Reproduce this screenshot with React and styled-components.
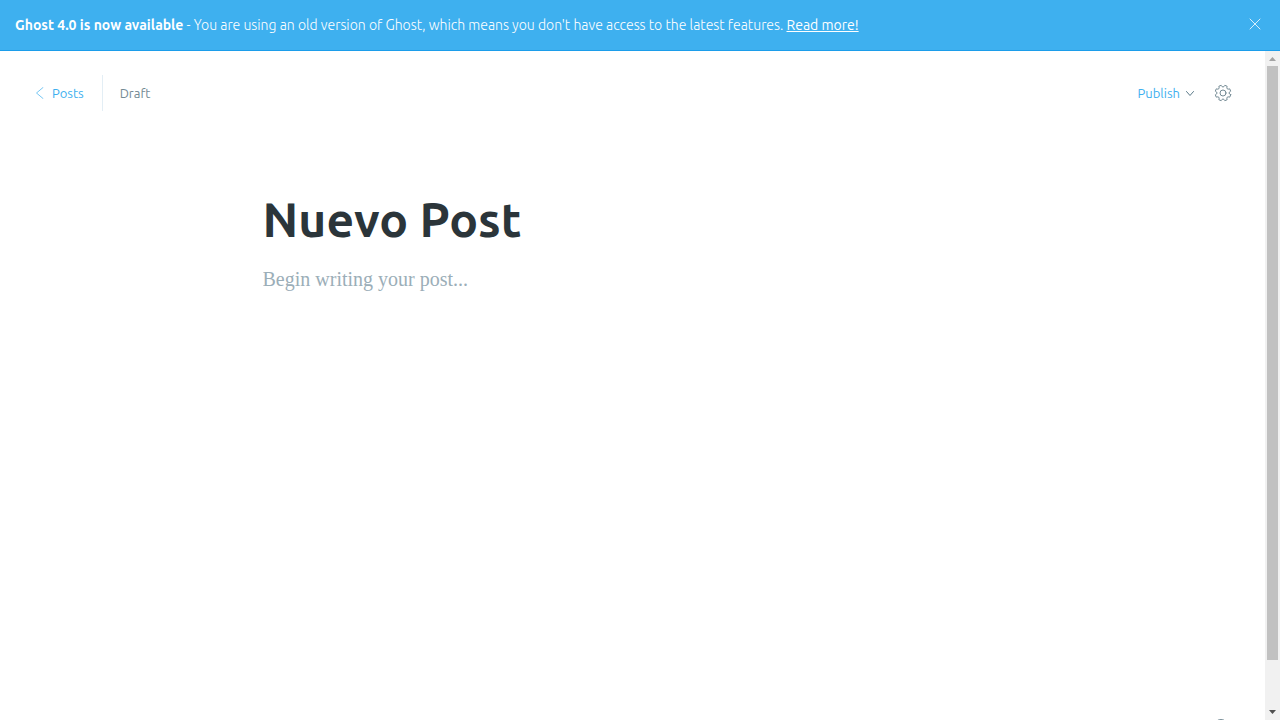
import React from 'react';
import styled, { createGlobalStyle } from 'styled-components';

const GlobalStyle = createGlobalStyle`
  *, *::before, *::after { box-sizing: border-box; }
  body {
    margin: 0;
    overflow: hidden;
    background: #fff;
    font-family: Ubuntu, "Open Sans", "Noto Sans", sans-serif;
  }
  button, input, textarea { font-family: inherit; }
`;

const Screen = styled.div`
  display: flex;
  flex-direction: column;
  height: 100vh;
`;

const Banner = styled.aside`
  display: flex;
  align-items: center;
  justify-content: space-between;
  flex: none;
  padding: 14px 19px 14px 15px;
  border-bottom: 1px solid #1c9dea;
  background: #3eb0ef;
  color: #fff;
`;

const Message = styled.p`
  margin: 0;
  font-size: 14px;
  line-height: 22px;
  font-weight: 300;
`;

const Strong = styled.strong`
  font-weight: 700;
`;

const BannerLink = styled.a`
  color: #fff;
  font-weight: 400;
  text-decoration: underline;
`;

const IconButton = styled.button`
  display: flex;
  padding: 0;
  border: 0;
  background: none;
  color: ${(p) => p.$color};
`;

const Body = styled.div`
  display: flex;
  flex: 1;
  min-height: 0;
`;

const Main = styled.main`
  display: flex;
  flex-direction: column;
  flex: 1;
  min-width: 0;
  overflow: hidden;
`;

const Header = styled.header`
  display: flex;
  align-items: center;
  justify-content: space-between;
  flex: none;
  padding: 24px 33px 0 34px;
`;

const Group = styled.div`
  display: flex;
  align-items: center;
  gap: ${(p) => p.$gap}px;
`;

const BackLink = styled.a`
  display: flex;
  align-items: center;
  gap: 6px;
  height: 36px;
  padding-right: 18px;
  border-right: 1px solid #e3eef5;
  color: #3eb0ef;
  font-size: 13px;
  text-decoration: none;
`;

const Status = styled.span`
  color: #738a94;
  font-size: 13px;
`;

const PublishButton = styled.button`
  display: flex;
  align-items: center;
  gap: 5px;
  padding: 0;
  border: 0;
  background: none;
  color: #3eb0ef;
  font-size: 13px;
`;

const Editor = styled.section`
  display: flex;
  flex-direction: column;
  flex: none;
  width: 100%;
  max-width: 740px;
  min-height: 608px;
  margin: 0 auto;
  padding-top: 78px;
`;

const TitleInput = styled.input`
  width: 100%;
  height: 60px;
  padding: 0;
  border: 0;
  outline: 0;
  background: none;
  color: #2b353a;
  font-size: 48px;
  font-weight: 700;
`;

const PostInput = styled.textarea`
  width: 100%;
  height: 64px;
  margin-top: 14px;
  padding: 0;
  border: 0;
  outline: 0;
  resize: none;
  background: none;
  font-family: "Liberation Serif", serif;
  font-size: 20px;
  line-height: 32px;
  color: #15171a;
  &::placeholder { color: #9baeb8; opacity: 1; }
`;

const HelpRow = styled.div`
  display: flex;
  justify-content: flex-end;
  flex: none;
  padding-right: 36px;
`;

const Scrollbar = styled.div`
  display: flex;
  flex-direction: column;
  justify-content: space-between;
  align-items: center;
  flex: none;
  width: 15px;
  background: #f1f1f1;
`;

const ScrollThumb = styled.div`
  flex: 1;
  width: 11px;
  margin-bottom: 45px;
  background: #c1c1c1;
`;

const Svg = styled.svg`
  display: block;
  fill: none;
  stroke: currentColor;
  stroke-linecap: round;
  stroke-linejoin: round;
`;

const ArrowSvg = styled.svg`
  display: block;
  flex: none;
`;

const TEETH = 8;

function gearPath() {
  const point = (radius, degrees) => {
    const a = (degrees * Math.PI) / 180;
    return `${(9 + radius * Math.cos(a)).toFixed(2)} ${(9 + radius * Math.sin(a)).toFixed(2)}`;
  };
  const parts = [];
  for (let i = 0; i < TEETH; i += 1) {
    const c = 22.5 + i * 45;
    parts.push(`${i ? 'L' : 'M'}${point(7.9, c - 9)}`);
    parts.push(`L${point(7.9, c + 9)}`);
    parts.push(`Q${point(4.2, c + 22.5)} ${point(7.9, c + 36)}`);
  }
  return `${parts.join('')}Z`;
}

export default function App() {
  return (
    <Screen>
      <GlobalStyle />
      <Banner>
        <Message>
          <Strong>Ghost 4.0 is now available</Strong> - You are using an old version of Ghost, which means
          {" you don't have access to the latest features. "}
          <BannerLink href="#read-more">Read more!</BannerLink>
        </Message>
        <IconButton $color="#d8effc" aria-label="Close">
          <Svg width="12" height="14" viewBox="0 0 12 14">
            <path d="M1 1l10 10M11 1L1 11" />
          </Svg>
        </IconButton>
      </Banner>
      <Body>
        <Main>
          <Header>
            <Group $gap={17}>
              <BackLink href="#posts">
                <Svg width="12" height="14" viewBox="0 0 12 14" opacity="0.7">
                  <path d="M9 1.5L2.5 7L9 12.5" />
                </Svg>
                Posts
              </BackLink>
              <Status>Draft</Status>
            </Group>
            <Group $gap={19}>
              <PublishButton>
                Publish
                <Svg width="10" height="8" viewBox="0 0 10 8" color="#5b7a89">
                  <path d="M1.5 2.5L5 6.5L8.5 2.5" />
                </Svg>
              </PublishButton>
              <IconButton $color="#738a94" aria-label="Settings">
                <Svg width="18" height="18" viewBox="0 0 18 18">
                  <path d={gearPath()} />
                  <circle cx="9" cy="9" r="3" />
                </Svg>
              </IconButton>
            </Group>
          </Header>
          <Editor>
            <TitleInput aria-label="Post title" defaultValue="Nuevo Post" />
            <PostInput aria-label="Post content" placeholder="Begin writing your post..." />
          </Editor>
          <HelpRow>
            <IconButton $color="#738a94" aria-label="Help">
              <Svg width="16" height="16" viewBox="0 0 16 16">
                <circle cx="8" cy="8" r="7.5" />
                <path d="M6 6.5a2 2 0 1 1 2 2v1M8 11.5v.2" />
              </Svg>
            </IconButton>
          </HelpRow>
        </Main>
        <Scrollbar aria-hidden="true">
          <ArrowSvg width="15" height="15" viewBox="0 0 15 15">
            <path d="M4 10L7.5 6L11 10Z" fill="#a3a3a3" />
          </ArrowSvg>
          <ScrollThumb />
          <ArrowSvg width="15" height="15" viewBox="0 0 15 15">
            <path d="M4 5L7.5 9L11 5Z" fill="#505050" />
          </ArrowSvg>
        </Scrollbar>
      </Body>
    </Screen>
  );
}
